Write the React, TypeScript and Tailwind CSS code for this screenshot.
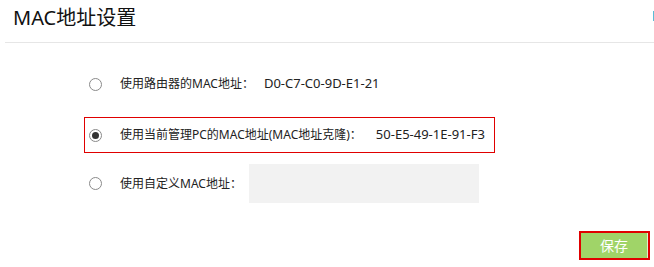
import { useState } from 'react';

type Mode = 'router' | 'pc' | 'custom';

function Radio({ checked, onClick }: { checked: boolean; onClick: () => void }) {
  return (
    <button
      type="button"
      onClick={onClick}
      className="flex h-[13px] w-[13px] shrink-0 items-center justify-center rounded-full border border-[#8a8a8a] bg-white"
    >
      {checked && <span className="h-[7px] w-[7px] rounded-full bg-[#333]" />}
    </button>
  );
}

export default function App() {
  const [mode, setMode] = useState<Mode>('pc');
  const [custom, setCustom] = useState('');

  const rowBase = 'ml-[84px] flex items-center pl-[4px] border';

  return (
    <div
      className="h-[267px] w-[654px] bg-white text-[#222]"
      style={{ fontFamily: '"Noto Sans", "Noto Sans CJK SC", sans-serif' }}
    >
      {/* Header */}
      <div className="flex h-[42px] items-start justify-between">
        <h1 className="ml-[13px] mt-[3px] text-[20px] leading-[30px] font-normal text-[#111]">MAC地址设置</h1>
        <div className="mt-[11px] h-[10px] w-px bg-[#5bbcd6]" />
      </div>
      <div className="ml-[5px] h-px bg-[#e6e6e6]" />

      {/* Options */}
      <div className="flex flex-col text-[12px]">
        <div className={`${rowBase} mt-[23px] h-[36px] w-[411px] border-transparent`}>
          <Radio checked={mode === 'router'} onClick={() => setMode('router')} />
          <span className="ml-[18px]">使用路由器的MAC地址：</span>
          <span className="ml-[10px] text-[13px]">D0-C7-C0-9D-E1-21</span>
        </div>

        <div
          className={`${rowBase} mt-[15px] h-[36px] w-[411px] ${mode === 'pc' ? 'border-[#e00000]' : 'border-transparent'}`}
        >
          <Radio checked={mode === 'pc'} onClick={() => setMode('pc')} />
          <span className="ml-[18px]">使用当前管理PC的MAC地址(MAC地址克隆)：</span>
          <span className="ml-[14px] text-[13px]">50-E5-49-1E-91-F3</span>
        </div>

        <div className={`${rowBase} mt-[11px] h-[39px] w-[411px] border-transparent`}>
          <Radio checked={mode === 'custom'} onClick={() => setMode('custom')} />
          <span className="ml-[18px]">使用自定义MAC地址：</span>
          <input
            value={custom}
            onChange={(e) => setCustom(e.target.value)}
            className="ml-[7px] h-[39px] w-[230px] bg-[#f2f2f2] px-2 text-[12px] outline-none"
          />
        </div>
      </div>

      {/* Footer */}
      <div className="mt-[28px] flex justify-end pr-[4px]">
        <div className="flex h-[29px] w-[71px] border-2 border-solid border-[#e00000] bg-white">
          <button type="button" className="h-full flex-1 bg-[#a0d468] text-[14px] text-white">
            保存
          </button>
          <div className="w-px bg-[#dff0cc]" />
        </div>
      </div>
    </div>
  );
}
